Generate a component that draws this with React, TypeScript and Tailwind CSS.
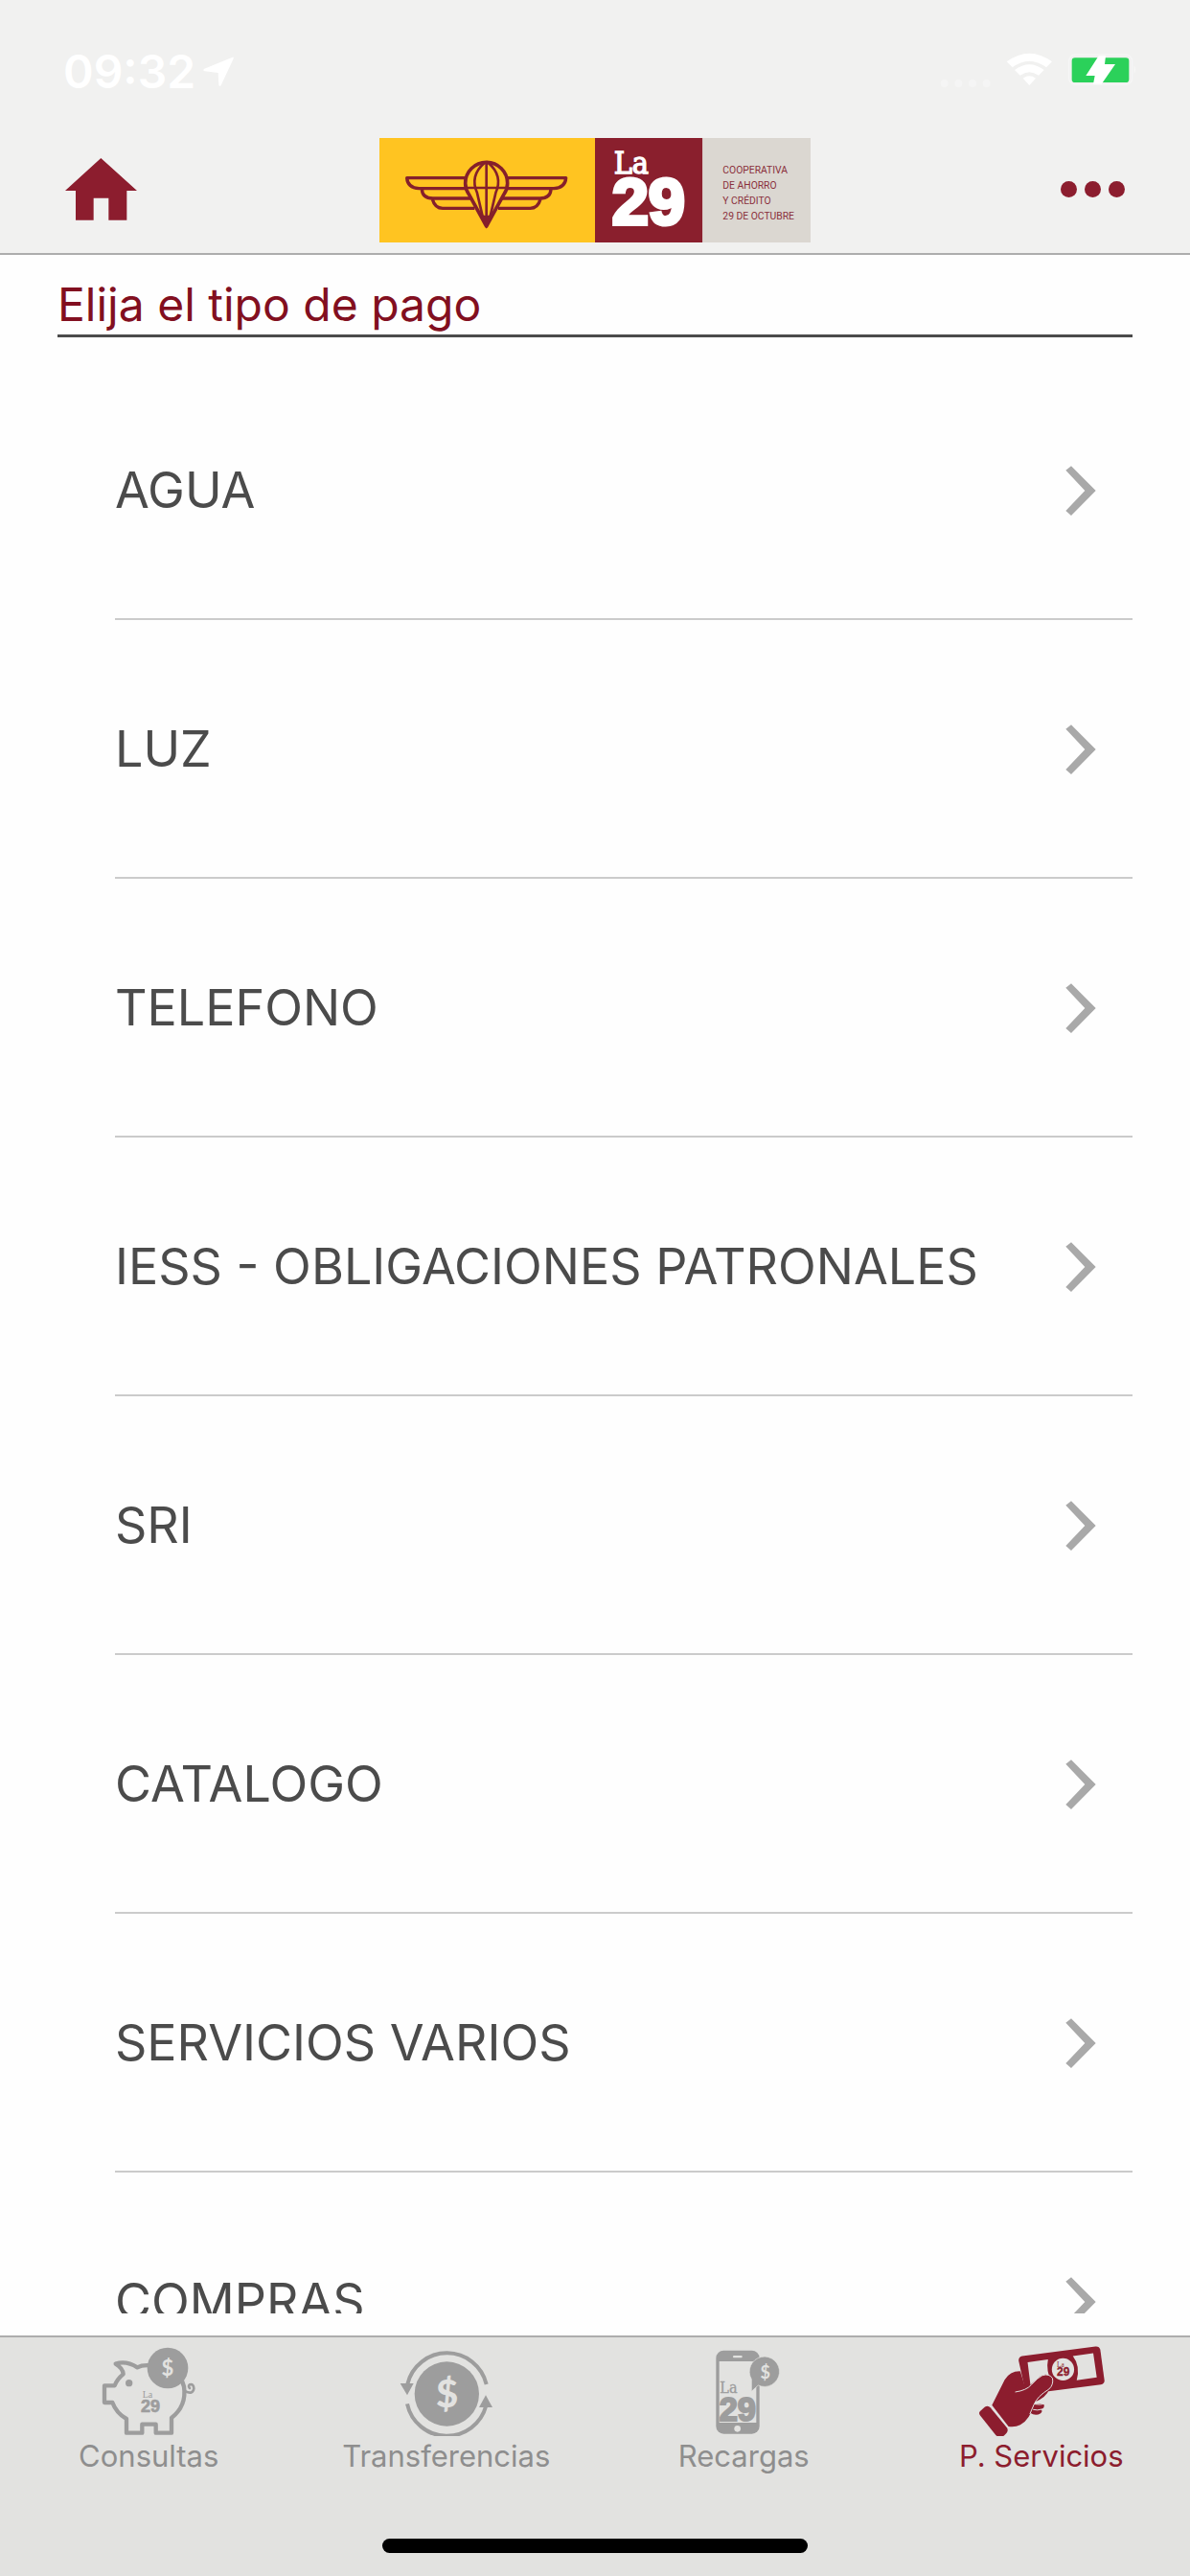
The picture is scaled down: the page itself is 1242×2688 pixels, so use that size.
import { useState, type ReactNode } from 'react';
import { clsx } from 'clsx';

interface TabItem {
  readonly id: string;
  readonly label: string;
  readonly icon: ReactNode;
}

const services = [
  'AGUA',
  'LUZ',
  'TELEFONO',
  'IESS - OBLIGACIONES PATRONALES',
  'SRI',
  'CATALOGO',
  'SERVICIOS VARIOS',
  'COMPRAS',
];

function StatusBar() {
  return (
    <div className="flex h-[132px] items-center justify-between pt-[18px] pr-14 pl-[66px] text-white">
      <div className="flex items-center gap-2">
        <span className="text-[48px] leading-[60px] font-semibold">09:32</span>
        <svg viewBox="0 0 96 96" className="h-8 w-8" fill="currentColor" aria-hidden="true">
          <path d="M92 2 Q96 1 95 7 L56 90 Q51 97 49 88 L47 51 L5 46 Q-3 43 4 38 Z" />
        </svg>
      </div>
      <svg viewBox="0 0 615 120" className="h-10 w-[205px]" fill="currentColor" aria-hidden="true">
        <g opacity="0.35">
          <circle cx="14" cy="96" r="12" />
          <circle cx="58" cy="96" r="12" />
          <circle cx="102" cy="96" r="12" />
          <circle cx="146" cy="96" r="12" />
        </g>
        <path d="M209 28 Q280 -24 351 28 L333 46 Q280 6 227 46 Z" />
        <path d="M234 54 Q280 20 326 54 L309 71 Q280 50 251 71 Z" />
        <path d="M260 80 Q280 66 300 80 L280 102 Z" />
        <rect
          x="404"
          y="6"
          width="198"
          height="94"
          rx="20"
          fill="none"
          stroke="currentColor"
          strokeWidth="4"
          opacity="0.4"
        />
        <rect x="413" y="16" width="179" height="77" rx="10" fill="#2bd15a" />
        <path d="M497 10 L519 10 L516 36 L549 36 L506 98 L480 98 L485 72 L457 72 Z" />
        <path d="M608 40 Q616 53 608 66 Z" opacity="0.5" />
      </svg>
    </div>
  );
}

function HomeIcon() {
  return (
    <svg viewBox="198 492 225 195" className="h-[65px] w-[75px]" fill="#8c1d2e" aria-hidden="true">
      <path d="M310 492 L423 594 L391 594 L391 686 L334 686 L334 617 L287 617 L287 686 L231 686 L231 594 L198 594 Z" />
    </svg>
  );
}

function BrandLogo() {
  return (
    <svg viewBox="48 42 1350 327" className="h-[109px] w-[450px]" role="img" aria-label="La 29">
      <rect x="48" y="42" width="675" height="327" fill="#ffc421" />
      <rect x="723" y="42" width="337" height="327" fill="#8a1f2d" />
      <rect x="1060" y="42" width="338" height="327" fill="#dbd7d1" />
      <g fill="none" stroke="#85202b" strokeWidth="10" strokeLinejoin="round">
        <path d="M318 167 H134 Q136 198 172 200 H594 Q630 198 632 167 H450" />
        <path d="M181 202 Q182 230 215 231 H335" />
        <path d="M214 234 Q222 262 246 262 H346" />
        <path d="M585 202 Q584 230 551 231 H431" />
        <path d="M552 234 Q544 262 520 262 H420" />
      </g>
      <path
        d="M317 184 A66 66 0 0 1 449 184 Q449 202 438 218 L383 318 L328 218 Q317 202 317 184 Z"
        fill="#ffc421"
        stroke="#85202b"
        strokeWidth="11"
        strokeLinejoin="round"
      />
      <g fill="none" stroke="#85202b" strokeWidth="8">
        <path d="M318 198 H448" />
        <path d="M383 120 V300" />
        <path d="M377 120 Q330 160 354 214 L373 296" />
        <path d="M389 120 Q436 160 412 214 L393 296" />
      </g>
      <path d="M362 278 Q383 292 404 278 L383 326 Z" fill="#85202b" />
      <text
        x="782"
        y="152"
        fill="#fff"
        stroke="#fff"
        strokeWidth="4"
        className="font-['DejaVu_Serif_Condensed','DejaVu_Serif',serif] text-[96px]"
      >
        La
      </text>
      <text
        x="776"
        y="313"
        fill="#fff"
        stroke="#fff"
        strokeWidth="12"
        className="font-['Liberation_Sans',sans-serif] text-[206px] font-bold"
      >
        29
      </text>
      <g fill="#8a2f3b" className="font-['Roboto',sans-serif] text-[31px]">
        <text x="1123" y="153">COOPERATIVA</text>
        <text x="1123" y="200">DE AHORRO</text>
        <text x="1123" y="248">Y CRÉDITO</text>
        <text x="1123" y="296">29 DE OCTUBRE</text>
      </g>
    </svg>
  );
}

function Header() {
  return (
    <header className="border-b-2 border-[#adadad] bg-[#f1f1f0]">
      <StatusBar />
      <div className="grid h-[132px] grid-cols-[1fr_auto_1fr] items-center px-[68px]">
        <button type="button" aria-label="Inicio" className="justify-self-start pb-0.5">
          <HomeIcon />
        </button>
        <BrandLogo />
        <button type="button" aria-label="Más opciones" className="flex gap-2 justify-self-end pb-0.5">
          <span className="h-[17px] w-[17px] rounded-full bg-[#8c1d2e]" />
          <span className="h-[17px] w-[17px] rounded-full bg-[#8c1d2e]" />
          <span className="h-[17px] w-[17px] rounded-full bg-[#8c1d2e]" />
        </button>
      </div>
    </header>
  );
}

function ServiceRow({ name }: { readonly name: string }) {
  return (
    <li className="border-b-2 border-[#cbcbcb]">
      <button
        type="button"
        className="flex h-[268px] w-full items-center justify-between pt-0.5 pr-[38px] text-left text-[52px] leading-[64px] text-[#4b4b4b]"
      >
        <span>{name}</span>
        <svg viewBox="156 76 96 156" className="h-[52px] w-8 shrink-0" fill="#a9a9a9" aria-hidden="true">
          <path d="M157 90 L174 77 L251 154 L174 232 L157 217 L217 154 Z" />
        </svg>
      </button>
    </li>
  );
}

function PiggyIcon() {
  return (
    <svg viewBox="135 50 300 285" className="h-[95px] w-[100px]" aria-hidden="true">
      <path
        d="M290 114 Q265 112 250 120 Q215 98 182 109 Q204 122 206 141 Q187 156 179 177 L147 177 L147 230 L172 230 Q185 264 216 281 L216 325 L265 325 L265 298 L308 298 L308 325 L357 325 L357 278 Q405 240 396 180 Q392 165 384 152"
        fill="none"
        stroke="#9d9d9d"
        strokeWidth="13"
        strokeLinejoin="round"
      />
      <path
        d="M400 195 Q424 206 427 186 Q426 170 414 174 Q408 179 414 185"
        fill="none"
        stroke="#9d9d9d"
        strokeWidth="8"
        strokeLinecap="round"
      />
      <circle cx="224" cy="169" r="11" fill="#9d9d9d" />
      <circle cx="345" cy="122" r="64" fill="#9d9d9d" />
      <text
        x="345"
        y="147"
        textAnchor="middle"
        fill="#e2e2e0"
        className="font-['Lato',sans-serif] text-[66px] font-bold"
      >
        $
      </text>
      <text x="266" y="214" fill="#9d9d9d" className="font-['Liberation_Serif',serif] text-[30px]">
        La
      </text>
      <text
        x="261"
        y="259"
        fill="#9d9d9d"
        stroke="#9d9d9d"
        strokeWidth="2"
        className="font-['Liberation_Sans',sans-serif] text-[54px] font-bold"
      >
        29
      </text>
    </svg>
  );
}

function TransferIcon() {
  return (
    <svg viewBox="230 50 300 285" className="h-[95px] w-[100px]" aria-hidden="true">
      <g fill="none" stroke="#9d9d9d" strokeWidth="12">
        <path d="M258 172 A127 127 0 0 1 505 173" />
        <path d="M257 234 A127 127 0 0 0 504 240" />
      </g>
      <path d="M235 170 L277 170 L257 207 Z" fill="#9d9d9d" />
      <path d="M482 245 L524 245 L503 207 Z" fill="#9d9d9d" />
      <circle cx="381" cy="203" r="101" fill="#9d9d9d" />
      <text
        x="382"
        y="246"
        textAnchor="middle"
        fill="#e2e2e0"
        className="font-['Lato',sans-serif] text-[120px] font-black"
      >
        $
      </text>
    </svg>
  );
}

function PhoneIcon() {
  return (
    <svg viewBox="139 50 300 285" className="h-[95px] w-[100px]" aria-hidden="true">
      <rect x="203" y="67" width="136" height="261" rx="24" fill="#9d9d9d" />
      <rect x="213" y="101" width="116" height="192" fill="#e2e2e0" />
      <rect x="256" y="83" width="29" height="7" rx="3" fill="#e2e2e0" />
      <circle cx="270" cy="312" r="10" fill="#e2e2e0" />
      <path
        d="M314 195 L314 157 A47 47 0 1 1 335 176 Z"
        fill="#9d9d9d"
        stroke="#e2e2e0"
        strokeWidth="2"
      />
      <text
        x="357"
        y="154"
        textAnchor="middle"
        fill="#e2e2e0"
        className="font-['Lato',sans-serif] text-[54px] font-bold"
      >
        $
      </text>
      <text
        x="215"
        y="201"
        fill="#9d9d9d"
        stroke="#9d9d9d"
        strokeWidth="1"
        className="font-['DejaVu_Serif_Condensed','DejaVu_Serif',serif] text-[48px]"
      >
        La
      </text>
      <text
        x="213"
        y="286"
        fill="#9d9d9d"
        stroke="#9d9d9d"
        strokeWidth="6"
        className="font-['Liberation_Sans',sans-serif] text-[103px] font-bold"
      >
        29
      </text>
    </svg>
  );
}

function PaymentIcon() {
  return (
    <svg viewBox="181 50 400 285" className="h-[95px] w-[133px]" aria-hidden="true">
      <path
        d="M322 84 L552 54 Q564 53 567 64 L580 160 Q581 171 569 174 L346 202 Q334 202 331 190 L311 99 Q310 87 322 84 Z"
        fill="#8c1d2e"
      />
      <path d="M339 104 L403 95 Q396 130 414 166 L349 184 Z" fill="#e2e2e0" />
      <path d="M481 84 L545 75 L556 151 L493 160 Q505 115 481 84 Z" fill="#e2e2e0" />
      <circle cx="450" cy="126" r="35" fill="#e2e2e0" />
      <text x="431" y="119" fill="#8c1d2e" className="font-['Liberation_Serif',serif] text-[22px]">
        La
      </text>
      <text
        x="431"
        y="146"
        fill="#8c1d2e"
        stroke="#8c1d2e"
        strokeWidth="1"
        className="font-['Liberation_Sans',sans-serif] text-[36px] font-bold"
      >
        29
      </text>
      <path
        d="M358 230 Q398 216 408 186 L388 180 L346 220 L346 262 Q364 274 380 264 Q388 257 380 252 Q394 247 390 236 Q382 232 358 236 Z"
        fill="#8c1d2e"
      />
      <path
        d="M227 238 L267 159 Q284 131 316 132 L332 184 L346 176 L378 148 Q398 136 413 150 Q425 170 406 188 Q370 210 359 236 Q346 284 316 300 Q300 308 279 305 Z"
        fill="#8c1d2e"
      />
      <path
        d="M300 197 Q335 192 350 175 Q370 152 385 145 Q407 138 417 154 Q421 174 406 188 Q370 210 359 236 L346 266"
        fill="none"
        stroke="#e2e2e0"
        strokeWidth="3"
      />
      <path d="M362 235 Q378 238 392 234 M356 252 Q370 256 384 251" fill="none" stroke="#e2e2e0" strokeWidth="3" />
      <path
        d="M190 257 Q184 263 190 271 L239 332 Q249 343 263 335 Q282 322 274 309 L222 246 Q215 238 205 244 Z"
        fill="#8c1d2e"
      />
    </svg>
  );
}

const tabs: readonly TabItem[] = [
  { id: 'consultas', label: 'Consultas', icon: <PiggyIcon /> },
  { id: 'transferencias', label: 'Transferencias', icon: <TransferIcon /> },
  { id: 'recargas', label: 'Recargas', icon: <PhoneIcon /> },
  { id: 'servicios', label: 'P. Servicios', icon: <PaymentIcon /> },
];

function TabBar() {
  const [active, setActive] = useState('servicios');

  return (
    <nav className="border-t-2 border-[#adadad] bg-[#e2e2e0]">
      <div className="grid grid-cols-4 pt-2">
        {tabs.map((tab) => (
          <button
            key={tab.id}
            type="button"
            aria-current={tab.id === active ? 'page' : undefined}
            onClick={() => setActive(tab.id)}
            className={clsx(
              'flex flex-col items-center gap-[3px] text-[31px] leading-9',
              tab.id === active ? 'text-[#8c1d2e]' : 'text-[#8e8e8e]'
            )}
          >
            {tab.icon}
            <span>{tab.label}</span>
          </button>
        ))}
      </div>
      {/* home indicator */}
      <div className="flex justify-center pt-[68px] pb-6">
        <div className="h-[15px] w-[444px] rounded-full bg-black" />
      </div>
    </nav>
  );
}

export default function App() {
  return (
    <div className="flex h-screen flex-col bg-[#fefefe] font-['Inter','Liberation_Sans',sans-serif]">
      <Header />
      <main className="mb-[23px] min-h-0 flex-1 overflow-hidden px-[60px]">
        <h1 className="border-b-3 border-[#4b4b4b] pt-[22px] pb-px text-[48px] leading-[60px] text-[#820f20]">
          Elija el tipo de pago
        </h1>
        <ul className="pt-[25px] pl-[60px]">
          {services.map((name) => (
            <ServiceRow key={name} name={name} />
          ))}
        </ul>
      </main>
      <TabBar />
    </div>
  );
}
